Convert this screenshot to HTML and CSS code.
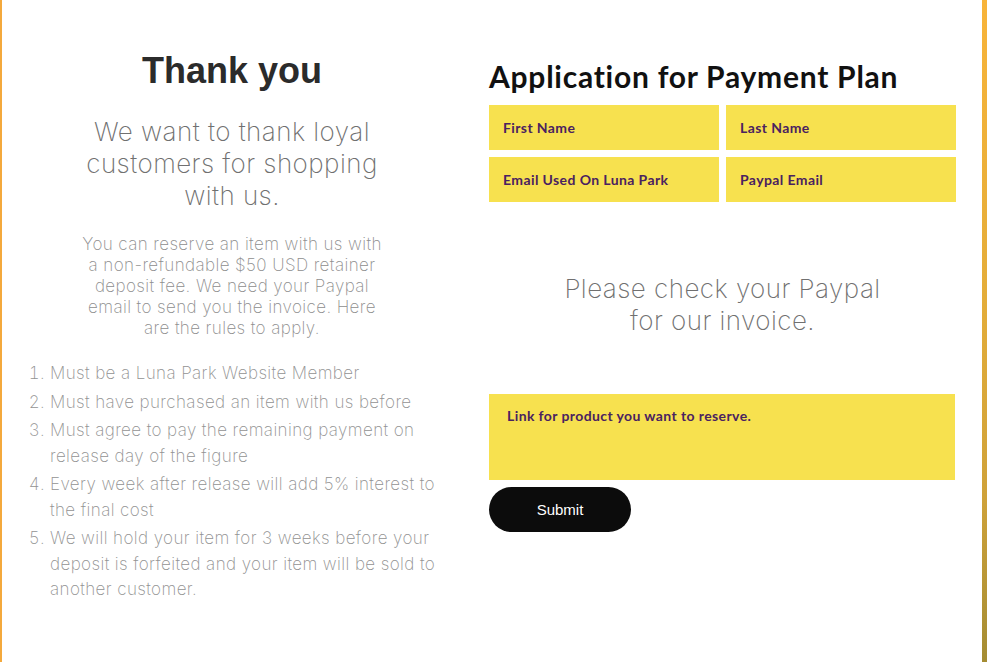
FILE: index.html
```html
<!DOCTYPE html>
<html lang="en">
<head>
    <meta charset="UTF-8">
    <title>Payment Plan</title>
    <link rel="stylesheet" href="styles.css">
</head>
<body>
    <div class="page">
        <div class="content">
            <section class="intro">
                <h1>Thank you</h1>
                <p class="lead">We want to thank loyal customers for shopping with us.</p>
                <p class="note">You can reserve an item with us with a non-refundable $50 USD retainer deposit fee. We need your Paypal email to send you the invoice. Here are the rules to apply.</p>
                <ol class="rules">
                    <li>Must be a Luna Park Website Member</li>
                    <li>Must have purchased an item with us before</li>
                    <li>Must agree to pay the remaining payment on release day of the figure</li>
                    <li>Every week after release will add 5% interest to the final cost</li>
                    <li>We will hold your item for 3 weeks before your deposit is forfeited and your item will be sold to another customer.</li>
                </ol>
            </section>

            <section class="apply">
                <h2>Application for Payment Plan</h2>
                <form class="fields" onsubmit="return false">
                    <input type="text" placeholder="First Name">
                    <input type="text" placeholder="Last Name">
                    <input type="email" placeholder="Email Used On Luna Park">
                    <input type="email" placeholder="Paypal Email">
                </form>
                <p class="check">Please check your Paypal for our invoice.</p>
                <textarea placeholder="Link for product you want to reserve."></textarea>
                <button class="submit">Submit</button>
            </section>
        </div>
        <div class="edge"></div>
    </div>
</body>
</html>
```

FILE: styles.css
```css
body {
    margin: 0;
    background-color: #fff;
    font-family: "Inter", "Liberation Sans", sans-serif;
}

.page {
    display: flex;
    min-height: 662px;
    border-left: 2px solid #f4a93c;
    box-sizing: border-box;
}

.content {
    flex: 1;
    display: flex;
    padding-left: 20px;
}

.edge {
    width: 5px;
    background: linear-gradient(#f8b43a, #e4ad3a 45%, #cfa23a 75%, #a48c33);
}

/* left column */

.intro {
    width: 420px;
    text-align: center;
}

h1 {
    font-family: "Liberation Sans", Arial, sans-serif;
    font-size: 36px;
    font-weight: bold;
    color: #2b2b2b;
    margin: 50px 0 0;
    line-height: 42px;
}

.lead {
    font-weight: 200;
    font-size: 26px;
    line-height: 32px;
    letter-spacing: 0.45px;
    color: #707070;
    width: 310px;
    margin: 24px auto 0;
}

.note {
    font-weight: 200;
    font-size: 17px;
    line-height: 21px;
    letter-spacing: 0.4px;
    color: #8e8e8e;
    width: 304px;
    margin: 22px auto 0;
}

.rules {
    text-align: left;
    font-weight: 200;
    font-size: 17px;
    line-height: 25.5px;
    letter-spacing: 0.4px;
    color: #929292;
    margin: 22px 0 0;
    padding-left: 28px;
}

.rules li {
    margin-bottom: 3px;
}

/* right column */

.apply {
    width: 467px;
    margin-left: 47px;
}

h2 {
    font-family: "Lato", "Liberation Sans", sans-serif;
    font-size: 30px;
    font-weight: bold;
    letter-spacing: 0.75px;
    color: #111;
    margin: 58px 0 0;
    line-height: 36px;
}

.fields {
    display: grid;
    grid-template-columns: 1fr 1fr;
    gap: 7px;
    margin-top: 11px;
}

input,
textarea {
    background-color: #f7e14f;
    border: none;
    font-family: "Lato", "Liberation Sans", sans-serif;
    font-size: 14px;
    font-weight: bold;
    letter-spacing: 0.4px;
    color: #4a2260;
    outline: none;
    box-sizing: border-box;
}

input {
    height: 45px;
    padding: 0 14px;
}

input::placeholder,
textarea::placeholder {
    color: #4a2260;
    opacity: 1;
}

.check {
    font-weight: 200;
    font-size: 26px;
    line-height: 32px;
    letter-spacing: 0.45px;
    color: #707070;
    text-align: center;
    width: 330px;
    margin: 71px auto 0;
}

textarea {
    display: block;
    width: 466px;
    height: 86px;
    margin-top: 57px;
    padding: 13px 18px;
    resize: none;
}

.submit {
    display: block;
    margin-top: 7px;
    width: 142px;
    height: 45px;
    border: none;
    border-radius: 23px;
    background-color: #0c0c0c;
    color: #fff;
    font-family: "Liberation Sans", Arial, sans-serif;
    font-size: 15px;
    cursor: pointer;
}
```
